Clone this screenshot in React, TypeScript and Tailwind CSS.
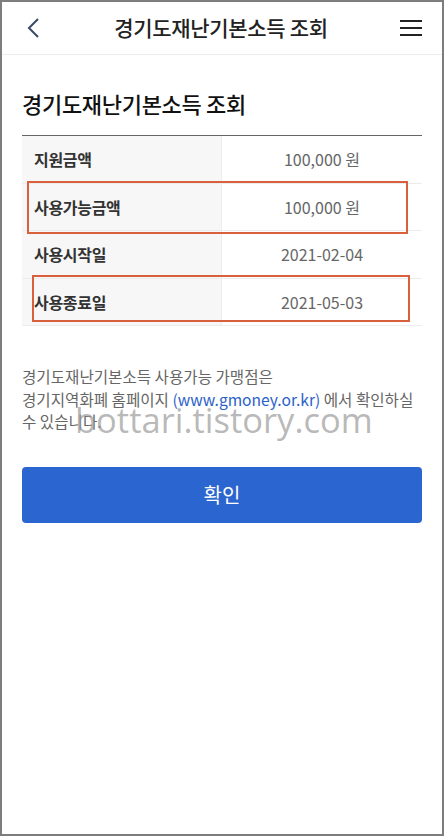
import React from 'react';

const rows = [
  { label: '지원금액', value: '100,000 원' },
  { label: '사용가능금액', value: '100,000 원' },
  { label: '사용시작일', value: '2021-02-04' },
  { label: '사용종료일', value: '2021-05-03' },
];

const font = { fontFamily: '"Noto Sans CJK KR", "Noto Sans", sans-serif' };

export default function App() {
  return (
    <div
      className="relative w-[444px] h-[836px] bg-white border-2 border-[#7d7d7d] overflow-hidden"
      style={font}
    >
      {/* Header */}
      <header className="h-[53px] flex items-center justify-between px-[22px] border-b border-[#ececec]">
        <svg width="16" height="22" viewBox="0 0 16 22" className="ml-[2px]">
          <path d="M12 2 L3 11 L12 20" fill="none" stroke="#3a4a66" strokeWidth="2" />
        </svg>
        <h1 className="text-[21px] font-medium text-[#222] tracking-[-0.3px]">경기도재난기본소득 조회</h1>
        <svg width="22" height="18" viewBox="0 0 22 18" className="-mr-[2px]">
          <rect x="0" y="1" width="22" height="2" fill="#222" />
          <rect x="0" y="8" width="22" height="2" fill="#222" />
          <rect x="0" y="15" width="22" height="2" fill="#222" />
        </svg>
      </header>

      <main className="px-[20px]">
        <h2 className="mt-[33px] text-[22px] font-medium text-[#111] tracking-[-0.3px] leading-[30px]">
          경기도재난기본소득 조회
        </h2>

        <div className="mt-[17px] border-t border-[#666]">
          {rows.map((r) => (
            <div key={r.label} className="grid grid-cols-2 h-[47.5px] border-b border-[#ececec]">
              <div className="bg-[#f7f7f7] border-r border-[#ececec] flex items-center pl-[12px] text-[16px] font-semibold text-[#333] tracking-[-0.3px]">
                {r.label}
              </div>
              <div className="flex items-center justify-center text-[16px] text-[#666]">
                {r.value}
              </div>
            </div>
          ))}
        </div>

        <div className="mt-[39px] text-[15.6px] leading-[22.5px] text-[#666] whitespace-nowrap">
          <p>경기도재난기본소득 사용가능 가맹점은</p>
          <p>
            경기지역화폐 홈페이지 <span className="text-[#2a62c9]">(www.gmoney.or.kr)</span> 에서 확인하실
          </p>
          <p>수 있습니다.</p>
        </div>

        <button className="mt-[34px] w-full h-[56px] rounded-[4px] bg-[#2b65cf] text-white text-[20px]">
          확인
        </button>
      </main>

      {/* annotation boxes */}
      <div className="absolute left-[25px] top-[179px] w-[381px] h-[53px] border-2 border-[#d9603c]" />
      <div className="absolute left-[30px] top-[273px] w-[378px] h-[47px] border-2 border-[#d9603c]" />

      {/* watermark */}
      <div
        className="absolute left-[73px] top-[392px] text-[34.5px] text-[#9a9a9a]/70 pointer-events-none"
        style={{ fontFamily: '"Open Sans", sans-serif' }}
      >
        bottari.tistory.com
      </div>
    </div>
  );
}
